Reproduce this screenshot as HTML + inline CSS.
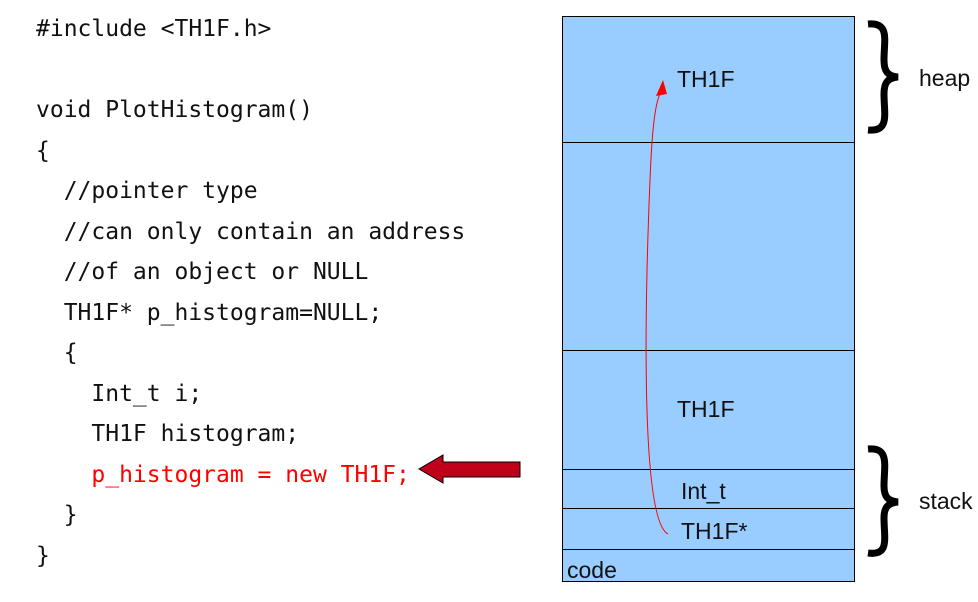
<!DOCTYPE html>
<html><head><style>
body{margin:0;width:978px;height:602px;background:#fff;position:relative;overflow:hidden}
.c{position:absolute;font-family:"DejaVu Sans Mono","Liberation Mono",monospace;font-size:23px;white-space:pre;color:#111;line-height:28px}
.l{position:absolute;font-family:"Liberation Sans",sans-serif;font-size:23px;color:#111;line-height:24px}
</style></head><body>
<div class="c" style="left:36px;top:15px">#include &lt;TH1F.h&gt;</div>
<div class="c" style="left:36px;top:96px">void PlotHistogram()</div>
<div class="c" style="left:36px;top:137px">{</div>
<div class="c" style="left:36px;top:177px">  //pointer type</div>
<div class="c" style="left:36px;top:218px">  //can only contain an address</div>
<div class="c" style="left:36px;top:258px">  //of an object or NULL</div>
<div class="c" style="left:36px;top:299px">  TH1F* p_histogram=NULL;</div>
<div class="c" style="left:36px;top:339px">  {</div>
<div class="c" style="left:36px;top:380px">    Int_t i;</div>
<div class="c" style="left:36px;top:420px">    TH1F histogram;</div>
<div class="c" style="left:36px;top:461px;color:#f00">    p_histogram = new TH1F;</div>
<div class="c" style="left:36px;top:501px">  }</div>
<div class="c" style="left:36px;top:542px">}</div>
<svg style="position:absolute;left:0;top:0" width="978" height="602">
<rect x="562.5" y="16.5" width="292" height="565" fill="#99ccff" stroke="#000" stroke-width="1"/>
<g stroke="#000" stroke-width="1">
<line x1="562" y1="142.5" x2="855" y2="142.5"/>
<line x1="562" y1="350.5" x2="855" y2="350.5"/>
<line x1="562" y1="469.5" x2="855" y2="469.5"/>
<line x1="562" y1="508.5" x2="855" y2="508.5"/>
<line x1="562" y1="549.5" x2="855" y2="549.5"/>
</g>
<path d="M668 534 C640 520 645 300 650 180 C652 130 655 100 662 90" fill="none" stroke="#f00" stroke-width="1"/>
<path d="M663 80 L656 96 L667 94 Z" fill="#f00"/>
<path d="M520 462 L443 462 L443 455 L419 469 L443 483 L443 477 L520 477 Z" fill="#c0001a" stroke="#000" stroke-width="1"/>
<path d="M868 24 C890 22 884 40 884 60 C884 72 888 76 898 77 C888 78 884 82 884 94 C884 114 890 132 868 130" fill="none" stroke="#000" stroke-width="7"/>
<path d="M868 449 C890 447 884 466 884 486 C884 497 888 501 898 502 C888 503 884 507 884 518 C884 538 890 556 868 553" fill="none" stroke="#000" stroke-width="7"/>
</svg>
<div class="l" style="left:677px;top:67px">TH1F</div>
<div class="l" style="left:677px;top:397px">TH1F</div>
<div class="l" style="left:681px;top:479px">Int_t</div>
<div class="l" style="left:681px;top:519px">TH1F*</div>
<div class="l" style="left:567px;top:558px">code</div>
<div class="l" style="left:919px;top:66px">heap</div>
<div class="l" style="left:919px;top:489px">stack</div>
</body></html>
